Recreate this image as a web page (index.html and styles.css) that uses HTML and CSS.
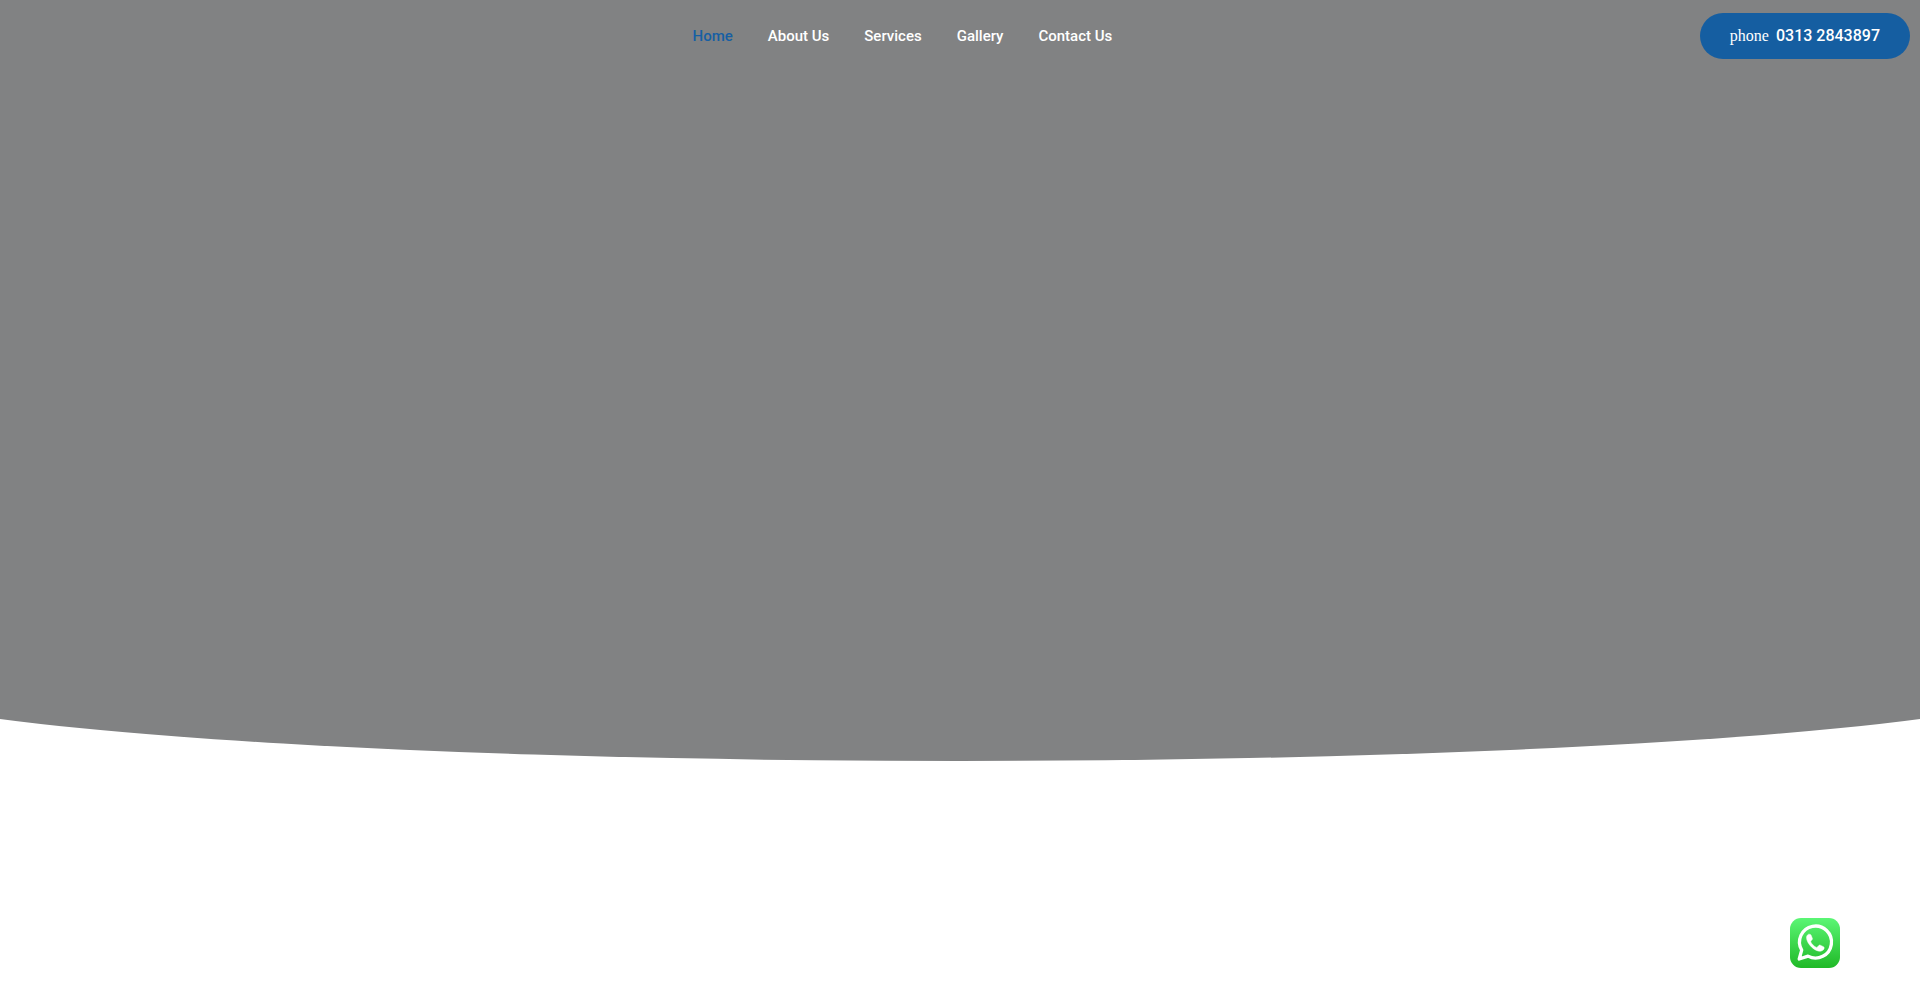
FILE: index.html
```html
<!DOCTYPE html>
<html lang="en">
<head>
<meta charset="utf-8">
<meta name="viewport" content="width=device-width, initial-scale=1">
<title>Home</title>
<link rel="stylesheet" href="styles.css">
</head>
<body>
<div class="hero">
  <header class="header">
    <nav class="nav">
      <a class="nav-link active" href="#home">Home</a>
      <a class="nav-link" href="#about">About Us</a>
      <a class="nav-link" href="#services">Services</a>
      <a class="nav-link" href="#gallery">Gallery</a>
      <a class="nav-link" href="#contact">Contact Us</a>
    </nav>
    <a class="call" href="tel:03132843897"><span class="call-icon">phone</span><span>0313 2843897</span></a>
  </header>
</div>
<svg class="curve" viewBox="0 0 1920 42" preserveAspectRatio="none" aria-hidden="true">
  <path d="M0 0A1100 82 0 0 0 1920 0Z"/>
</svg>
<a class="whatsapp" href="#whatsapp" aria-label="WhatsApp">
  <svg viewBox="0 0 50 50" aria-hidden="true">
    <defs>
      <linearGradient id="green" x1="0" y1="0" x2="0" y2="1">
        <stop offset="0" stop-color="#5bf675"/>
        <stop offset="1" stop-color="#20b927"/>
      </linearGradient>
    </defs>
    <rect width="50" height="50" rx="11" fill="url(#green)"/>
    <path d="M9.200 41L11.700 32.100A16 16 0 1 1 18 38.150Z" fill="none" stroke="#fff" stroke-width="3.300" stroke-linejoin="round"/>
    <path d="M19.300 16.200C18.200 15.900 16.600 17.400 16.500 19.500C16.400 22.400 18.800 26.400 21.700 29.200C24.500 31.800 27.800 33.400 30.300 33.200C32.600 33 34.300 31.300 34.200 29.800C34.200 29.300 33.900 29 33.400 28.700L30.300 27.200C29.500 26.900 29.100 27.100 28.600 27.700L27.500 29C27.100 29.500 26.600 29.500 26 29.200C23.800 28 22 26.200 20.900 24.200C20.600 23.600 20.700 23.200 21.100 22.800L22.200 21.500C22.500 21.100 22.500 20.700 22.300 20.200L21 17.100C20.700 16.500 20.200 16.200 19.300 16.200Z" fill="#fff" stroke="#fff" stroke-width=".5"/>
  </svg>
</a>
</body>
</html>
```
FILE: styles.css
```css
body {
  margin: 0;
  background: #fff;
  font-family: Roboto, sans-serif;
  font-weight: 500;
}

.hero {
  min-height: 719px;
  background: #818283;
}

.header {
  display: grid;
  grid-template-columns: 20% 54% 26%;
  align-items: center;
  padding: 13px 0;
}

.nav {
  grid-column: 2;
  display: flex;
  justify-content: center;
  gap: 35px;
}

.nav-link {
  color: #fff;
  font-size: 15px;
  line-height: 20px;
  text-decoration: none;
}

.nav-link.active {
  color: #165fa3;
}

.call {
  grid-column: 3;
  justify-self: end;
  display: flex;
  align-items: baseline;
  gap: 7px;
  margin-right: 10px;
  padding: 13px 30px;
  border-radius: 23px;
  background: #155ea1;
  color: #fff;
  font-size: 16px;
  line-height: 20px;
  text-decoration: none;
}

.call-icon {
  font-family: "Liberation Serif", serif;
  font-weight: 400;
}

.curve {
  display: block;
  width: 100%;
  height: 42px;
  fill: #818283;
}

.whatsapp {
  position: fixed;
  right: 80px;
  bottom: 25px;
  width: 50px;
  height: 50px;
}

.whatsapp svg {
  display: block;
}
```
